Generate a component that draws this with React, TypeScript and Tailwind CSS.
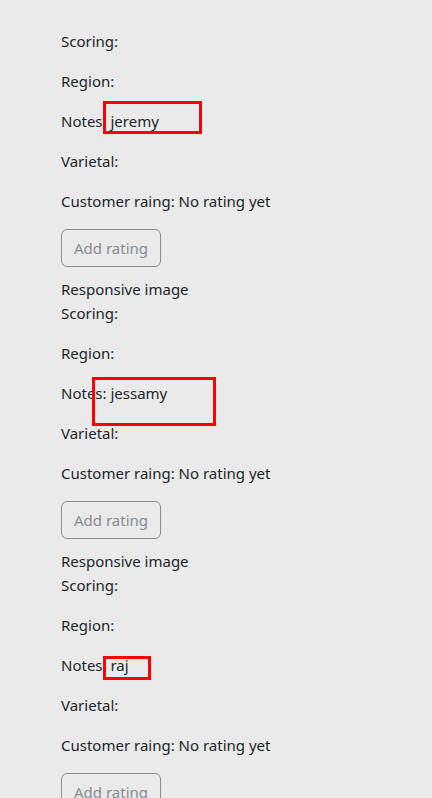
const notes = [
  { name: "jeremy", box: "left-[42px] -top-[8px] w-[99px] h-[33px]" },
  { name: "jessamy", box: "left-[31px] -top-[4px] w-[124px] h-[49px]" },
  { name: "raj", box: "left-[42px] top-[3px] w-[48px] h-[24px]" },
];

export default function App() {
  return (
    <div
      className="min-h-screen bg-[#eaeaea] text-[#212529] text-[15px] leading-6 px-[61px] pt-[29px]"
      style={{ fontFamily: '"Noto Sans", sans-serif' }}
    >
      {notes.map((n, i) => (
        <div key={n.name}>
          {i > 0 && <div>Responsive image</div>}
          <p className="mb-4">Scoring:</p>
          <p className="mb-4">Region:</p>
          <p className="mb-4 relative">
            Notes: {n.name}
            <span className={`absolute border-[3px] border-[#ff0000] ${n.box}`} />
          </p>
          <p className="mb-4">Varietal:</p>
          <p className="mb-4">Customer raing: No rating yet</p>
          <button
            disabled
            className="h-[38px] w-[100px] rounded-md border border-[#6c757d] text-[#6c757d] opacity-80 mb-[10px]"
          >
            Add rating
          </button>
        </div>
      ))}
    </div>
  );
}
